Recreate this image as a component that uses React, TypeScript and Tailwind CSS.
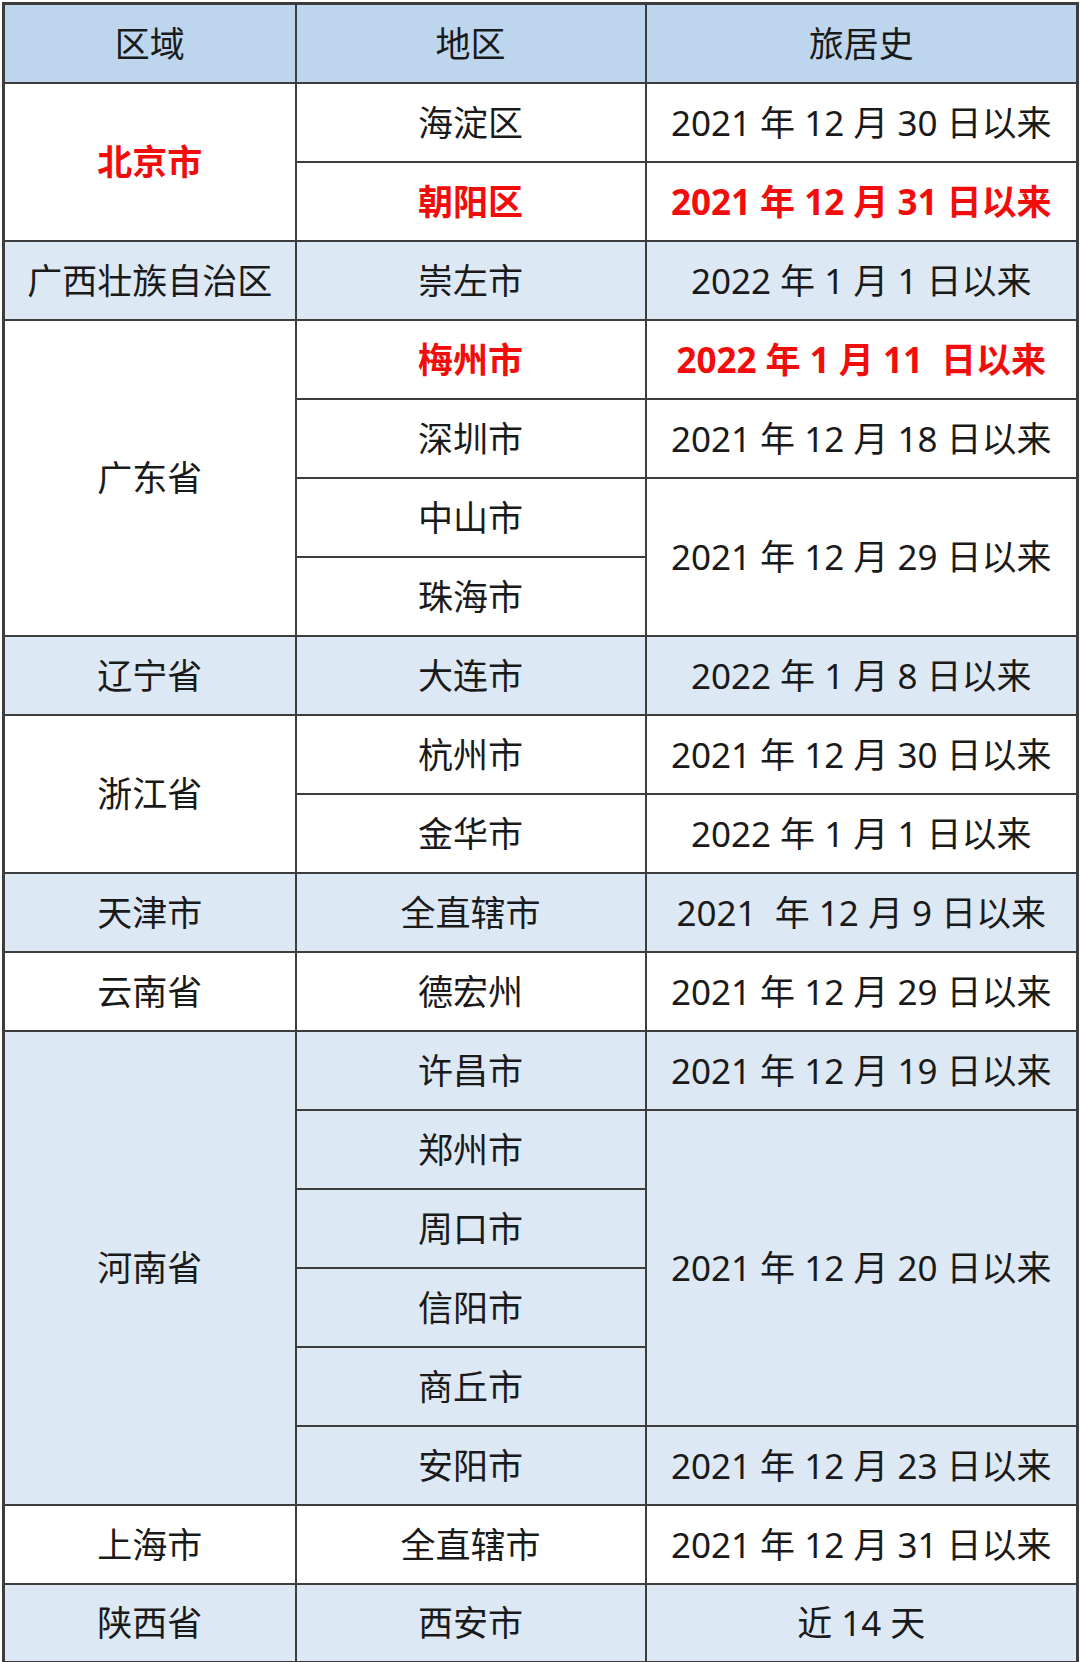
type Cell = { text: string; rowSpan?: number; red?: boolean };
type Row = { region?: Cell; area: Cell; date?: Cell; band: boolean };

const rows: Row[] = [
  { region: { text: "北京市", rowSpan: 2, red: true }, area: { text: "海淀区" }, date: { text: "2021 年 12 月 30 日以来" }, band: false },
  { area: { text: "朝阳区", red: true }, date: { text: "2021 年 12 月 31 日以来", red: true }, band: false },
  { region: { text: "广西壮族自治区" }, area: { text: "崇左市" }, date: { text: "2022 年 1 月 1 日以来" }, band: true },
  { region: { text: "广东省", rowSpan: 4 }, area: { text: "梅州市", red: true }, date: { text: "2022 年 1 月 11  日以来", red: true }, band: false },
  { area: { text: "深圳市" }, date: { text: "2021 年 12 月 18 日以来" }, band: false },
  { area: { text: "中山市" }, date: { text: "2021 年 12 月 29 日以来", rowSpan: 2 }, band: false },
  { area: { text: "珠海市" }, band: false },
  { region: { text: "辽宁省" }, area: { text: "大连市" }, date: { text: "2022 年 1 月 8 日以来" }, band: true },
  { region: { text: "浙江省", rowSpan: 2 }, area: { text: "杭州市" }, date: { text: "2021 年 12 月 30 日以来" }, band: false },
  { area: { text: "金华市" }, date: { text: "2022 年 1 月 1 日以来" }, band: false },
  { region: { text: "天津市" }, area: { text: "全直辖市" }, date: { text: "2021  年 12 月 9 日以来" }, band: true },
  { region: { text: "云南省" }, area: { text: "德宏州" }, date: { text: "2021 年 12 月 29 日以来" }, band: false },
  { region: { text: "河南省", rowSpan: 6 }, area: { text: "许昌市" }, date: { text: "2021 年 12 月 19 日以来" }, band: true },
  { area: { text: "郑州市" }, date: { text: "2021 年 12 月 20 日以来", rowSpan: 4 }, band: true },
  { area: { text: "周口市" }, band: true },
  { area: { text: "信阳市" }, band: true },
  { area: { text: "商丘市" }, band: true },
  { area: { text: "安阳市" }, date: { text: "2021 年 12 月 23 日以来" }, band: true },
  { region: { text: "上海市" }, area: { text: "全直辖市" }, date: { text: "2021 年 12 月 31 日以来" }, band: false },
  { region: { text: "陕西省" }, area: { text: "西安市" }, date: { text: "近 14 天" }, band: true },
];

function Td({ cell }: { cell: Cell }) {
  return (
    <td
      rowSpan={cell.rowSpan}
      className={
        cell.red
          ? "border-2 border-[#3d3d3d] p-0 text-center align-middle whitespace-pre font-bold text-[#f20d0d]"
          : "border-2 border-[#3d3d3d] p-0 text-center align-middle whitespace-pre text-[#1a1a1a]"
      }
    >
      {cell.text}
    </td>
  );
}

export default function App() {
  return (
    <div className="w-[1080px] h-[1662px] bg-white pt-[2px] pl-[2px] font-['Noto_Sans','Noto_Sans_CJK_SC',sans-serif]">
      <table className="w-[1074px] table-fixed border-collapse border-[3px] border-[#3d3d3d] text-[35px] leading-none">
        <colgroup>
          <col className="w-[292px]" />
          <col className="w-[350px]" />
          <col className="w-[432px]" />
        </colgroup>
        <thead>
          <tr className="h-[79px] bg-[#bdd6ee]">
            <th className="border-2 border-[#3d3d3d] p-0 text-center font-normal text-[#1a1a1a]">区域</th>
            <th className="border-2 border-[#3d3d3d] p-0 text-center font-normal text-[#1a1a1a]">地区</th>
            <th className="border-2 border-[#3d3d3d] p-0 text-center font-normal text-[#1a1a1a]">旅居史</th>
          </tr>
        </thead>
        <tbody>
          {rows.map((r, i) => (
            <tr key={i} className={r.band ? "h-[79px] bg-[#dde8f5]" : "h-[79px] bg-white"}>
              {r.region && <Td cell={r.region} />}
              <Td cell={r.area} />
              {r.date && <Td cell={r.date} />}
            </tr>
          ))}
        </tbody>
      </table>
    </div>
  );
}
